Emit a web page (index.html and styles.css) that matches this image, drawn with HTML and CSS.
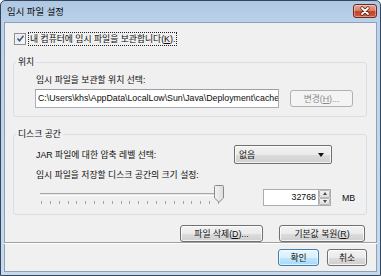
FILE: index.html
```html
<!DOCTYPE html>
<html lang="ko">
<head>
<meta charset="utf-8">
<title>임시 파일 설정</title>
<link rel="stylesheet" href="styles.css">
</head>
<body>
<div class="window">
  <div class="titlebar">
    <span class="title">임시 파일 설정</span>
    <span class="close">
      <svg width="24" height="14" viewBox="0 0 24 14">
        <path d="M9 4 L15 10 M15 4 L9 10" stroke="#5a1a10" stroke-width="3.2" stroke-linecap="round"/>
        <path d="M9 4 L15 10 M15 4 L9 10" stroke="#ffffff" stroke-width="1.8" stroke-linecap="round"/>
      </svg>
    </span>
  </div>
  <div class="client">
    <div class="main">
      <div class="check-row">
        <span class="checkbox">
          <svg width="9" height="9" viewBox="0 0 9 9"><path d="M1.5 4.5 L3.5 6.8 L7.5 1.8" fill="none" stroke="#3d5687" stroke-width="1.5"/></svg>
        </span>
        <span class="focus">내 컴퓨터에 임시 파일을 보관합니다(<u>K</u>).</span>
      </div>

      <fieldset class="group g1">
        <legend>위치</legend>
        <div class="label">임시 파일을 보관할 위치 선택:</div>
        <div class="path-row">
          <div class="textbox path">C:\Users\khs\AppData\LocalLow\Sun\Java\Deployment\cache</div>
          <div class="btn disabled btn-change">변경(<u>H</u>)...</div>
        </div>
      </fieldset>

      <fieldset class="group g2">
        <legend>디스크 공간</legend>
        <div class="jar-row">
          <span class="jar-label">JAR 파일에 대한 압축 레벨 선택:</span>
          <div class="combo"><span>없음</span><span class="arrow"></span></div>
        </div>
        <div class="label">임시 파일을 저장할 디스크 공간의 크기 설정:</div>
        <div class="slider-row">
          <div class="slider">
            <div class="track"></div>
            <div class="ticks">
              <i></i><i></i><i></i><i></i><i></i><i></i><i></i><i></i><i></i><i></i><i></i><i></i><i></i><i></i><i></i><i></i><i></i><i></i><i></i><i></i><i></i>
            </div>
            <svg class="thumb" width="10" height="18" viewBox="0 0 10 18">
              <defs>
                <linearGradient id="tg" x1="0" y1="0" x2="1" y2="0">
                  <stop offset="0" stop-color="#f4f4f4"/>
                  <stop offset="1" stop-color="#dcdcdc"/>
                </linearGradient>
              </defs>
              <path d="M0.5 1.5 Q0.5 0.5 1.5 0.5 L8.5 0.5 Q9.5 0.5 9.5 1.5 L9.5 13 L5 17.3 L0.5 13 Z" fill="url(#tg)" stroke="#8a8a8a"/>
            </svg>
          </div>
          <div class="spinner">
            <div class="spin-text">32768</div>
            <div class="spin-btns">
              <div class="spin-btn"><span class="up"></span></div>
              <div class="spin-btn"><span class="down"></span></div>
            </div>
          </div>
          <span class="unit">MB</span>
        </div>
      </fieldset>

      <div class="actions">
        <div class="btn btn-delete">파일 삭제(<u>D</u>)...</div>
        <div class="btn btn-restore">기본값 복원(<u>R</u>)</div>
      </div>
    </div>
    <div class="footer">
      <div class="btn default btn-ok">확인</div>
      <div class="btn btn-cancel">취소</div>
    </div>
  </div>
</div>
</body>
</html>
```
FILE: styles.css
```css
* { box-sizing: border-box; }

html, body {
  margin: 0;
  padding: 0;
  background: #ffffff;
}

body {
  font-family: "Liberation Sans", "Noto Sans CJK KR", sans-serif;
  font-size: 8.8px;
  color: #0c0c0c;
}

.window {
  width: 381px;
  height: 276px;
  border: 1px solid #35465a;
  border-radius: 5px 5px 0 0;
  background: linear-gradient(#aec7e3 0px, #bcd2ea 22px, #c6daee 100%);
  display: flex;
  flex-direction: column;
}

.titlebar {
  height: 21px;
  display: flex;
  align-items: center;
  justify-content: space-between;
  padding: 0 3px 0 6px;
}

.title {
  font-size: 9.4px;
  color: #0a0a0a;
  line-height: 12px;
}

.close {
  width: 24px;
  height: 14px;
  margin-top: -2px;
  border: 1px solid #6e2a1d;
  border-radius: 3px;
  background: linear-gradient(#e6a797 0%, #d9806a 45%, #c2432b 55%, #d05a3f 100%);
  display: flex;
  align-items: center;
  justify-content: center;
  box-shadow: inset 0 0 0 1px rgba(255,255,255,0.35);
}
.close svg { display: block; margin: -1px; }

.client {
  flex: 1;
  margin: 0 3px 3px;
  border: 1px solid #8da2ba;
  background: #f0f0f0;
  display: flex;
  flex-direction: column;
}

.main {
  flex: 1;
  display: flex;
  flex-direction: column;
}

.check-row {
  margin: 9px 0 0 9px;
  display: flex;
  align-items: center;
  height: 13px;
}

.checkbox {
  width: 12px;
  height: 12px;
  border: 1px solid #8e8f8f;
  background: linear-gradient(135deg, #dfe3e8, #fbfbfb);
  box-shadow: inset 0 0 0 1px #f4f4f4;
  display: flex;
  align-items: center;
  justify-content: center;
}
.checkbox svg { display: block; }

.focus {
  margin-left: 3px;
  padding: 0 1px;
  outline: 1px dotted #222;
  line-height: 12px;
  white-space: nowrap;
}

.group {
  margin: 11px 9px 0 8px;
  border: 1px solid #d5dfe5;
  border-radius: 3px;
  padding: 6px 10px 8px 22px;
  min-width: 0;
}

.group legend {
  padding: 0 2px;
  margin-left: -20px;
  line-height: 12px;
}

.label {
  line-height: 12px;
  white-space: nowrap;
}

.path-row {
  margin-top: 3px;
  display: flex;
  align-items: center;
  gap: 11px;
  margin-left: -1px;
}

.textbox {
  background: #fff;
  border: 1px solid #abadb3;
  border-top-color: #9a9da6;
  line-height: 15px;
  white-space: nowrap;
  overflow: hidden;
}

.path {
  width: 244px;
  height: 19px;
  padding: 1px 2px;
}

.btn {
  height: 17px;
  border: 1px solid #707070;
  border-radius: 3px;
  background: linear-gradient(#f2f2f2 0%, #ebebeb 50%, #dddddd 51%, #cfcfcf 100%);
  box-shadow: inset 0 0 0 1px rgba(255,255,255,0.75);
  display: flex;
  align-items: center;
  justify-content: center;
  line-height: 12px;
  white-space: nowrap;
  color: #111;
}

.btn.disabled {
  border-color: #adb2b5;
  background: #f4f4f4;
  color: #8a8a8a;
  box-shadow: none;
}

.btn.default {
  border-color: #3c7fb1;
  background: linear-gradient(#eaf6fd 0%, #d9f0fc 50%, #bee6fd 51%, #a7d9f5 100%);
  box-shadow: inset 0 0 0 1px rgba(255,255,255,0.6);
}

.btn-change { width: 63px; }

.jar-row {
  display: flex;
  align-items: center;
  justify-content: space-between;
  margin-top: -1px;
  height: 19px;
}

.jar-label { line-height: 12px; white-space: nowrap; }

.combo {
  width: 98px;
  height: 19px;
  margin-right: 24px;
  border: 1px solid #707070;
  border-radius: 2px;
  background: linear-gradient(#f2f2f2 0%, #ebebeb 50%, #dddddd 51%, #cfcfcf 100%);
  box-shadow: inset 0 0 0 1px rgba(255,255,255,0.75);
  display: flex;
  align-items: center;
  justify-content: space-between;
  padding: 0 7px 0 4px;
  line-height: 12px;
}

.arrow {
  width: 0;
  height: 0;
  border-left: 3.5px solid transparent;
  border-right: 3.5px solid transparent;
  border-top: 4px solid #111;
}

.g2 .label { margin-top: 5px; }

.slider-row {
  margin-top: 4px;
  display: flex;
  align-items: center;
  height: 21px;
}

.slider {
  position: relative;
  width: 184px;
  height: 21px;
  margin-left: 4px;
}

.track {
  margin-top: 8px;
  height: 3px;
  border-top: 1px solid #a9a9a9;
  border-bottom: 1px solid #ffffff;
  background: #e3e3e3;
}

.ticks {
  margin: 5px 5px 0 1px;
  display: flex;
  justify-content: space-between;
}
.ticks i {
  display: block;
  width: 1px;
  height: 3px;
  background: #a4a4a4;
}

.thumb {
  position: absolute;
  right: 0;
  top: 0;
  display: block;
}

.spinner {
  margin-left: 39px;
  display: flex;
  height: 17px;
  margin-top: 4px;
}

.spin-text {
  width: 55px;
  height: 17px;
  background: #fff;
  border: 1px solid #abadb3;
  border-right: none;
  text-align: right;
  padding: 0 2px;
  line-height: 15px;
}

.spin-btns {
  width: 13px;
  display: flex;
  flex-direction: column;
  border: 1px solid #abadb3;
  background: #fff;
}

.spin-btn {
  flex: 1;
  display: flex;
  align-items: center;
  justify-content: center;
  background: linear-gradient(#f3f3f3, #dedede);
  border: 1px solid #b8b8b8;
  border-radius: 1px;
}

.up, .down {
  width: 0;
  height: 0;
  border-left: 2.5px solid transparent;
  border-right: 2.5px solid transparent;
}
.up { border-bottom: 3px solid #4a4a4a; }
.down { border-top: 3px solid #4a4a4a; }

.unit {
  margin-left: 11px;
  margin-top: 4px;
  line-height: 12px;
}

.actions {
  margin: 10px 11px 0 0;
  display: flex;
  justify-content: flex-end;
  gap: 16px;
}

.btn-delete { width: 83px; }
.btn-restore { width: 86px; }

.footer {
  border-top: 1px solid #a0a0a0;
  box-shadow: inset 0 1px 0 #ffffff;
  padding: 6px 10px 5px 0;
  display: flex;
  justify-content: flex-end;
  gap: 8px;
  margin: 0 -1px;
}

.btn-ok { width: 41px; }
.btn-cancel { width: 40px; }
```
